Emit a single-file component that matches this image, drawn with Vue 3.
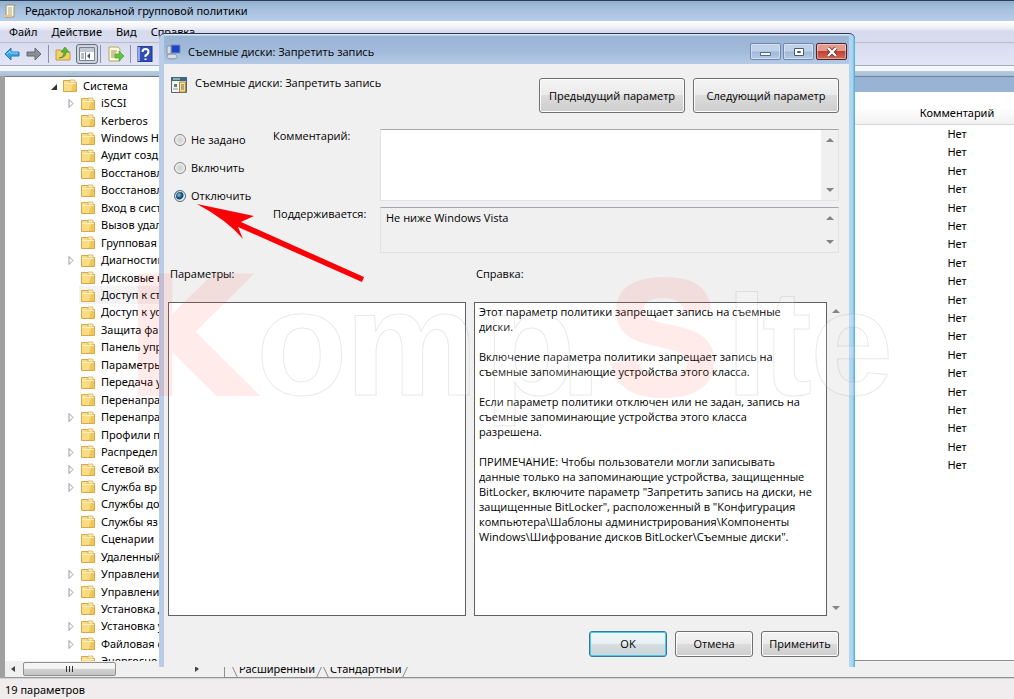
<script setup>
import { ref } from 'vue'

const tree = [
  { t: 'Система', root: true, open: true },
  { t: 'iSCSI', arrow: true },
  { t: 'Kerberos' },
  { t: 'Windows H' },
  { t: 'Аудит созд' },
  { t: 'Восстановл' },
  { t: 'Восстановл' },
  { t: 'Вход в сист' },
  { t: 'Вызов удал' },
  { t: 'Групповая' },
  { t: 'Диагностик', arrow: true },
  { t: 'Дисковые к' },
  { t: 'Доступ к ст', sel: true },
  { t: 'Доступ к ус' },
  { t: 'Защита фа' },
  { t: 'Панель упр' },
  { t: 'Параметры' },
  { t: 'Передача у' },
  { t: 'Перенапра' },
  { t: 'Перенапра', arrow: true },
  { t: 'Профили п' },
  { t: 'Распредел', arrow: true },
  { t: 'Сетевой вх', arrow: true },
  { t: 'Служба вр', arrow: true },
  { t: 'Службы до' },
  { t: 'Службы яз' },
  { t: 'Сценарии' },
  { t: 'Удаленный' },
  { t: 'Управлени', arrow: true },
  { t: 'Управлени', arrow: true },
  { t: 'Установка д' },
  { t: 'Установка у', arrow: true },
  { t: 'Файловая с', arrow: true },
  { t: 'Энергосне' }
]
const rows = Array.from({ length: 19 }, (_, i) => i)
const states = ['Не задано', 'Включить', 'Отключить']
const state = ref('Отключить')
const comment = ref('')
const supported = ref('Не ниже Windows Vista')
</script>

<template>
  <div class="desktop">
    <header class="titlebar">
      <svg class="ico" viewBox="0 0 16 16" aria-hidden="true">
        <path d="M4 2h9q-1 1-1 3v9H3q1-1 1-3z" fill="#fbf7e6" stroke="#9a8f70" />
        <path d="M6 5h4M6 7h4M6 9h4M6 11h4" stroke="#b3a98c" />
        <path d="M2 12h8v2H3q-1-1-1-2z" fill="#e3c77b" />
      </svg>
      <span>Редактор локальной групповой политики</span>
    </header>
    <nav class="menubar">
      <button>Файл</button><button>Действие</button><button>Вид</button><button>Справка</button>
    </nav>
    <div class="toolbar">
      <button aria-label="Назад">
        <svg class="ico" viewBox="0 0 16 16"><path d="M1 8l6-6v4h8v4H7v4z" fill="#35a7e6" stroke="#2478b0" /><path d="M3 8l3-3v2h8" fill="none" stroke="#8ad4f7" /></svg>
      </button>
      <button aria-label="Вперед">
        <svg class="ico" viewBox="0 0 16 16"><path d="M15 8L9 2v4H1v4h8v4z" fill="#8b8e94" stroke="#66696e" /></svg>
      </button>
      <i class="sep"></i>
      <button aria-label="Вверх">
        <svg class="ico" viewBox="0 0 16 16"><path d="M1 4h5l1 2h8v8H1z" fill="#f3d16a" stroke="#c39a3c" /><path d="M4 12q5-1 5-6H6l4-5 4 5h-3q0 6-7 6z" fill="#59b839" stroke="#388a24" stroke-width=".6" /></svg>
      </button>
      <button class="pressed" aria-label="Дерево консоли">
        <svg class="ico" viewBox="0 0 16 16"><path d="M.5 1.500h15v13H.5z" fill="#fff" stroke="#7b828e" /><path d="M1 3h14M1 5h14" stroke="#8991a0" /><path d="M6.500 6v8" stroke="#7b828e" /><path d="M2 8h3M2 10h3M2 12h3" stroke="#6b7587" /><path d="M11 7v6l-3-3z" fill="#4a5566" /></svg>
      </button>
      <i class="sep near"></i>
      <button aria-label="Экспорт">
        <svg class="ico" viewBox="0 0 16 16"><path d="M1 1h9l2 2v12H1z" fill="#fff9d8" stroke="#b4a66b" /><path d="M3 5h6M3 7h5M3 9h4M3 11h5" stroke="#9a915f" /><path d="M7 8h4V5l5 5-5 5v-3H7z" fill="#62c43b" stroke="#3d9a27" stroke-width=".6" /></svg>
      </button>
      <i class="sep"></i>
      <button aria-label="Справка">
        <svg class="ico" viewBox="0 0 16 16"><path d="M1 0h14v16H1z" fill="#2f4fb5" stroke="#1f3580" /><path d="M1 1h2v14H1z" fill="#93a8e6" /><path d="M5.500 6q0-3 3-3t3 2.500-3 4V11M8.500 12.500v1.500" fill="none" stroke="#fff" stroke-width="2" /></svg>
      </button>
    </div>
    <div class="band"></div>

    <main class="panes">
      <section class="treepane">
        <ul class="tree">
          <li v-for="(n, i) in tree" :key="i" :class="{ root: n.root, sel: n.sel }">
            <svg class="twist" viewBox="0 0 8 10" aria-hidden="true">
              <path v-if="n.open" d="M7 3v6H1z" fill="#333" />
              <path v-else-if="n.arrow" d="M2 1.500l4 4-4 4z" fill="#fff" stroke="#999" />
            </svg>
            <svg class="folder" viewBox="0 0 14 13" aria-hidden="true">
              <path d="M.5 1.500h8v2h5v9H.5z" fill="#f8dc86" stroke="#d3a94a" />
              <path d="M7 1h5v3H7z" fill="#fbeebd" stroke="#d3a94a" stroke-width=".7" />
              <path d="M1 4.500h12v7.500H1z" fill="#f9dc83" />
              <path d="M1 4.500h12" stroke="#fdf0bd" />
              <path d="M10 5h3v7h-5z" fill="#f0c757" />
            </svg>
            <span>{{ n.t }}</span>
          </li>
        </ul>
        <div class="hscroll">
          <svg viewBox="0 0 6 8" aria-hidden="true"><path d="M5 1v6L1 4z" fill="#444" /></svg>
          <div class="thumb"><i></i><i></i><i></i></div>
          <svg class="end" viewBox="0 0 6 8" aria-hidden="true"><path d="M1 1v6l4-3z" fill="#444" /></svg>
        </div>
      </section>
      <section class="list">
        <div class="listhead"></div>
        <div class="sheet">
          <table>
            <thead><tr><th>Комментарий</th></tr></thead>
            <tbody><tr v-for="r in rows" :key="r"><td>Нет</td></tr></tbody>
          </table>
        </div>
        <div class="tabs">
          <button>Расширенный</button><button>Стандартный</button>
        </div>
      </section>
    </main>
    <footer class="status">19 параметров</footer>

    <section class="dialog" role="dialog" aria-labelledby="dlg-title">
      <header class="dtitle">
        <svg class="ico" viewBox="0 0 16 16" aria-hidden="true"><path d="M5 1h9v8H5z" fill="#1c45c9" stroke="#7d8fb0" /><path d="M1 2h4v8H1z" fill="#d9dde4" stroke="#8790a0" /><path d="M8 10h4l1 3H7z" fill="#bfc8d5" /><ellipse cx="6" cy="12.500" rx="5" ry="2.500" fill="#d9dde4" stroke="#838ea0" /></svg>
        <span id="dlg-title">Съемные диски: Запретить запись</span>
        <div class="winbtns">
          <button aria-label="Свернуть"><svg viewBox="0 0 12 10"><path d="M.5 5.500h10v3H.5z" fill="#f6f9fd" stroke="#5a6980" /></svg></button>
          <button aria-label="Развернуть"><svg viewBox="0 0 12 10"><path d="M1.500 1.500h9v7h-9z" fill="#fff" stroke="#4c5a70" /><path d="M4.500 4.500h3v1h-3z" fill="#fff" stroke="#4c5a70" /></svg></button>
          <button class="close" aria-label="Закрыть"><svg viewBox="0 0 12 10"><path d="M2 1l8 8M10 1L2 9" stroke="#61312f" stroke-width="4" /><path d="M2 1l8 8M10 1L2 9" stroke="#fff" stroke-width="2.400" /></svg></button>
        </div>
      </header>
      <div class="client">
        <div class="top">
          <svg class="ico" viewBox="0 0 16 16" aria-hidden="true"><path d="M.5 1.500h15v14H.5z" fill="#f2f3ee" stroke="#59636d" /><path d="M0 0h16v4H0z" fill="#44647d" /><path d="M2 2h7" stroke="#8fd0c0" stroke-width="1.500" /><path d="M8.500 5h6v10h-6z" fill="#f7dc94" stroke="#aa8b45" /><path d="M10 8h3M10 10h3M10 12h3" stroke="#5d7d63" /><path d="M3 7h3v3H3z" fill="#637c8d" /><path d="M2 12h5" stroke="#99a" /></svg>
          <h1>Съемные диски: Запретить запись</h1>
          <button class="btn big">Предыдущий параметр</button>
          <button class="btn big">Следующий параметр</button>
        </div>
        <div class="form">
          <div class="radios">
            <label v-for="s in states" :key="s"><input v-model="state" type="radio" name="state" :value="s" />{{ s }}</label>
          </div>
          <label class="lab" for="comment">Комментарий:</label>
          <div class="box">
            <textarea id="comment" v-model="comment"></textarea>
            <div class="vs"><svg viewBox="0 0 8 5"><path d="M0 5l4-4 4 4z" /></svg><svg viewBox="0 0 8 5"><path d="M0 0l4 4 4-4z" /></svg></div>
          </div>
          <label class="lab" for="supported">Поддерживается:</label>
          <div class="box gray">
            <textarea id="supported" v-model="supported" readonly></textarea>
            <div class="vs"><svg viewBox="0 0 8 5"><path d="M0 5l4-4 4 4z" /></svg><svg viewBox="0 0 8 5"><path d="M0 0l4 4 4-4z" /></svg></div>
          </div>
        </div>
        <div class="lower">
          <h2>Параметры:</h2>
          <h2>Справка:</h2>
          <div class="panel"></div>
          <div class="help">
            <div class="panel text">
              <p>Этот параметр политики запрещает запись на съемные диски.</p>
              <p>Включение параметра политики запрещает запись на съемные запоминающие устройства этого класса.</p>
              <p>Если параметр политики отключен или не задан, запись на съемные запоминающие устройства этого класса разрешена.</p>
              <p>ПРИМЕЧАНИЕ: Чтобы пользователи могли записывать данные только на запоминающие устройства, защищенные BitLocker, включите параметр "Запретить запись на диски, не защищенные BitLocker", расположенный в "Конфигурация компьютера\Шаблоны администрирования\Компоненты Windows\Шифрование дисков BitLocker\Съемные диски".</p>
            </div>
            <div class="vs"><svg viewBox="0 0 8 5"><path d="M0 5l4-4 4 4z" /></svg><svg viewBox="0 0 8 5"><path d="M0 0l4 4 4-4z" /></svg></div>
          </div>
        </div>
        <div class="actions">
          <button class="btn primary">OK</button>
          <button class="btn">Отмена</button>
          <button class="btn">Применить</button>
        </div>
      </div>
    </section>

    <svg class="overlay" width="1014" height="699" viewBox="0 0 1014 699" aria-hidden="true">
      <g class="mark">
        <g class="red"><text class="k" x="125" y="394">K</text><text class="s" x="608" y="394">S</text></g>
        <text class="line" x="256 345 484 560 726 762 810" y="395">omp.Ite</text>
      </g>
      <path d="M197 204L254 216L241 222L364 277L362 282L238 227L243 239Q227 220 197 204z" fill="#fb0006" />
    </svg>
  </div>
</template>

<style>
body { margin: 0; }
</style>

<style scoped>
* { box-sizing: border-box; }
.desktop {
  position: relative; display: flex; flex-direction: column; min-height: 100vh; overflow: hidden;
  background: #f0f0f0; color: #000; font: 11px/16px "Noto Sans", "Open Sans", sans-serif;
}
button { font: inherit; color: inherit; padding: 0; margin: 0; border: 0; background: none; white-space: nowrap; }
.ico { width: 16px; height: 16px; display: block; flex: none; }
.titlebar {
  display: flex; align-items: center; gap: 7px; height: 21px; padding-left: 2px; border-top: 1px solid #2d3f5d;
  background: linear-gradient(#93b0cf, #a5c0dd 40%, #b7cdea);
}
.menubar {
  display: flex; align-items: center; gap: 14px; height: 22px; padding-left: 9px;
  background: linear-gradient(#fff, #eff1f8 30%, #d5daec 50%, #d8dcee); border-bottom: 1px solid #b6bccc;
}
.toolbar {
  display: flex; align-items: center; height: 23px; padding-left: 4px; gap: 6px;
  background: linear-gradient(#d9dcef, #e2e5f5); border-bottom: 1px solid #a5acba;
}
.sep { width: 1px; height: 18px; background: #8d93a3; }
.pressed { padding: 1px 2px; border: 1px solid #666f80; border-radius: 3px; background: #cfd4e2; margin: 0 -4px 0 -1px; }
.near { margin-right: 1px; }
.band { height: 10px; background: linear-gradient(#f4f7fc 5px, #b9cce0 5px, #a7bfd6); }
.panes { display: flex; flex: 1; min-height: 0; background: #a0a0a0; padding-left: 5px; }
.treepane { display: flex; flex-direction: column; width: 220px; background: #fff; border-right: 1px solid #8f8f8f; border-top: 1px solid #777; }
.tree {
  list-style: none; margin: 0 0 -9px; padding: 0 0 0 62px; flex: 1 1 0; overflow: hidden;
  display: grid; grid-template-rows: repeat(34, minmax(0, 1fr)); min-height: 592px;
}
.tree li { display: flex; align-items: center; white-space: nowrap; min-height: 0; }
.tree li.root { margin-left: -18px; }
.tree li.sel { background: linear-gradient(90deg, #fff 12px, #f3f3f3 12px); }
.twist { width: 8px; height: 10px; margin-right: 8px; }
.root .twist { margin-right: 6px; margin-left: 1px; }
.folder { width: 14px; height: 13px; margin: 0 6px 0 -2px; }
.root .folder { margin-left: -1px; }
.hscroll { position: relative; display: flex; align-items: center; height: 17px; padding: 0 24px 0 5px; background: #f0f0f0; border-bottom: 1px solid #999; }
.hscroll svg { width: 6px; height: 8px; }
.hscroll .end { margin-left: auto; }
.thumb {
  display: flex; align-items: center; justify-content: center; gap: 2px; width: 93px; height: 14px; margin-left: 7px;
  border: 1px solid #8f8f8f; border-radius: 2px; background: linear-gradient(#f5f5f5 45%, #d2d2d2 50%, #c5c5c5);
}
.thumb i { width: 1px; height: 6px; background: #333; }
.list { display: flex; flex-direction: column; flex: 1; background: #f0f0f0; border-top: 1px solid #6b7f96; }
.listhead { height: 15px; background: #98b3d3; }
.sheet { flex: 1; background: linear-gradient(#fff 16px, #f1f1f2 32px, #d6d6d6 32px, #d6d6d6 33px, #fff 33px); border-bottom: 1px solid #8f8f8f; }
table { table-layout: fixed; width: 114px; margin-left: auto; border-collapse: collapse; }
th { height: 33px; padding: 9px 0 0; font-weight: 400; text-align: center; }
td { padding: 1px 0; height: 18px; line-height: 16px; text-align: center; }
tbody tr:nth-child(5n + 3) td, tbody tr:nth-child(5n + 5) td { height: 19px; }
.tabs { display: flex; height: 17px; padding-left: 8px; border-bottom: 1px solid #909090; }
.tabs button { position: relative; height: 16px; padding: 0 6px; margin-right: 3px; }
.tabs button::before, .tabs button::after { content: ""; position: absolute; top: 0; bottom: 0; width: 1px; background: #888; }
.tabs button::before { left: 0; transform: skewX(25deg); }
.tabs button::after { right: 0; transform: skewX(-25deg); }
.status { height: 21px; padding: 3px 5px; background: #f1edee; border-top: 1px solid #d5d5d5; }

.dialog {
  position: absolute; left: 159px; top: 33px; width: 696px; border-top: 1px solid #27344b; border-radius: 6px 6px 0 0;
  padding: 0 6px 0 5px; font-family: "Open Sans", "Noto Sans", sans-serif;
  background: linear-gradient(90deg, #b9cde8 5px, transparent 5px, transparent 690px, #b4d6f4 690px, #abd3f2 694px, #55b5d6 695px), #a9c1de;
}
.dtitle { display: flex; align-items: center; gap: 6px; height: 30px; padding: 5px 2px 0 2px; background: linear-gradient(#dce8f6 1px, #9ab4d5 2px, #a3bbdb 60%, #b4cae7); }
.winbtns { display: flex; gap: 2px; margin-left: auto; }
.winbtns button {
  display: grid; place-items: center; width: 31px; height: 17px; border: 1px solid #7088aa; border-radius: 2px;
  background: linear-gradient(#bfd2e9 48%, #9fb9da 52%, #b3cbe8); box-shadow: inset 0 0 0 1px #ffffff66;
}
.winbtns svg { width: 12px; height: 10px; }
.winbtns .close { border-color: #4d2230; background: linear-gradient(#e49a8d 45%, #c4402f 50%, #d26b56); }
.client { background: #f0f0f0; padding: 14px 10px 10px 4px; }
.top { display: flex; gap: 8px; align-items: flex-start; padding-left: 3px; }
.top .ico { margin-top: -1px; }
.top h1 { flex: 1; font: inherit; margin: -3px 0 0; }
.btn {
  width: 78px; height: 26px; border: 1px solid #707070; border-radius: 3px;
  background: linear-gradient(#f3f3f3, #ebebeb 48%, #dcdcdc 50%, #cdcdcd); box-shadow: inset 0 0 0 1px #fcfcfc;
}
.btn.big { width: 146px; height: 35px; }
.btn.primary { border-color: #2f7c9e; box-shadow: inset 0 0 0 1px #48c8ec; background: linear-gradient(#f0f8fa, #e6eff2 48%, #d6dee1 50%, #cfd6d9); }
.form { display: grid; grid-template-columns: 101px 103px 1fr; grid-template-rows: 72px 46px; gap: 6px 4px; margin-top: 16px; }
.radios { grid-row: span 2; display: flex; flex-direction: column; gap: 12px; padding: 3px 0 0 6px; }
.radios label { display: flex; align-items: center; gap: 5px; }
.radios input {
  appearance: none; width: 12px; height: 12px; margin: 0; border: 1px solid #858585; border-radius: 50%;
  background: radial-gradient(#cfd0d2, #f2f2f2); box-shadow: inset 0 0 0 1px #f4f4f4;
}
.radios input:checked { border-color: #4b6b83; background: radial-gradient(circle at 4px 4px, #84c7e6, #1b5377 3px, #123a55 4px, #d8eaf3 5px); }
.lab { line-height: 14px; }
.box { display: flex; border: 1px solid #e0e2e6; border-top-color: #a5a6ab; background: #fff; }
.box.gray { background: #f0f0f0; }
.box textarea { flex: 1; min-width: 0; padding: 2px 5px; border: 0; resize: none; outline: 0; background: transparent; font: inherit; color: inherit; overflow: hidden; }
.vs { display: flex; flex-direction: column; justify-content: space-between; align-items: center; width: 17px; padding: 7px 0; background: #f0f0f0; }
.vs svg { width: 8px; height: 5px; fill: #858585; }
.lower { display: grid; grid-template-columns: 298px 1fr; gap: 20px 8px; margin: 13px -6px 0 0; }
.lower h2 { font: inherit; margin: 0 2px; }
.panel { border: 1px solid #606060; background: #fff; }
.help { display: flex; height: 314px; }
.help .panel { flex: 1; padding: 1px 8px 1px 4px; }
.help .vs { width: 18px; padding: 6px 0 5px; }
.help p { margin: 0 0 15px; line-height: 15px; }
.help p:not(:last-child) { padding-right: 12px; }
.actions { display: flex; justify-content: flex-end; gap: 8px; margin-top: 15px; }
.overlay { position: absolute; left: 0; top: 0; pointer-events: none; }
.mark { font-family: "Liberation Sans", sans-serif; font-weight: 700; }
.red { fill: #f43; opacity: .1; stroke: #f43; stroke-width: 4px; }
.k { font: 700 162px "DejaVu Sans", sans-serif; }
.s { font-size: 166px; }
.line { font-size: 150px; fill: #fff; fill-opacity: .15; stroke: #999; stroke-opacity: .22; stroke-width: 1; }
</style>
